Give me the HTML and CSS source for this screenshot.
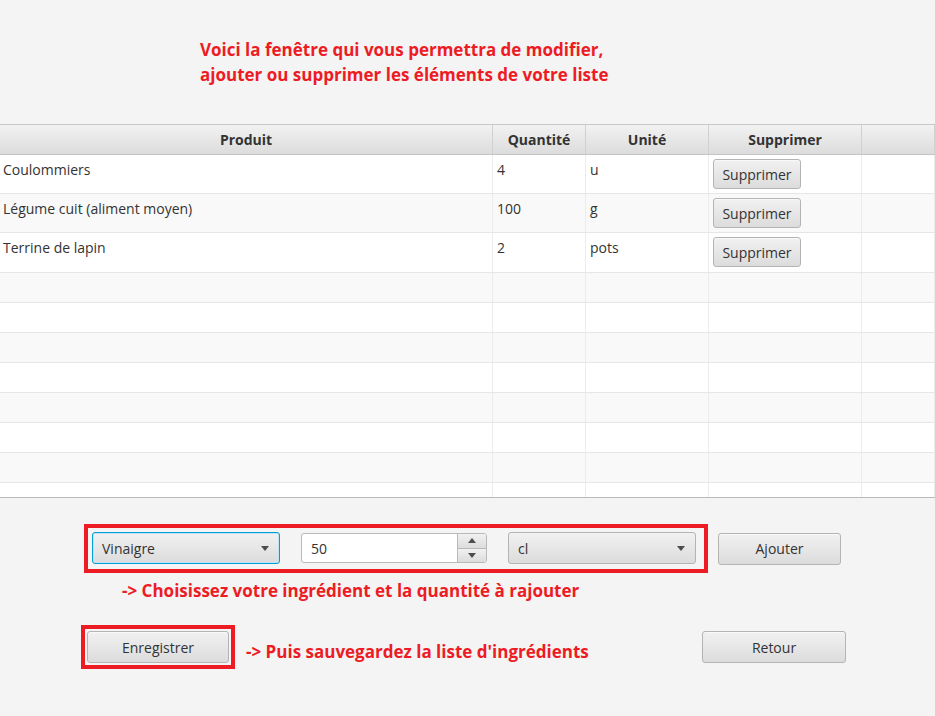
FILE: index.html
```html
<!DOCTYPE html>
<html lang="fr">
<head>
<meta charset="utf-8">
<title>Liste d'ingrédients</title>
<link rel="stylesheet" href="styles.css">
</head>
<body>
<div class="intro">
  <p class="title">Voici la fenêtre qui vous permettra de modifier,<br>ajouter ou supprimer les éléments de votre liste</p>
</div>
<div class="table">
  <div class="row thead">
    <div class="c c1">Produit</div>
    <div class="c c2">Quantité</div>
    <div class="c c3">Unité</div>
    <div class="c c4">Supprimer</div>
    <div class="c c5"></div>
  </div>
  <div class="tbody">
    <div class="row tall">
      <div class="c c1">Coulommiers</div>
      <div class="c c2">4</div>
      <div class="c c3">u</div>
      <div class="c c4"><button class="btn del">Supprimer</button></div>
      <div class="c c5"></div>
    </div>
    <div class="row tall">
      <div class="c c1">Légume cuit (aliment moyen)</div>
      <div class="c c2">100</div>
      <div class="c c3">g</div>
      <div class="c c4"><button class="btn del">Supprimer</button></div>
      <div class="c c5"></div>
    </div>
    <div class="row tall">
      <div class="c c1">Terrine de lapin</div>
      <div class="c c2">2</div>
      <div class="c c3">pots</div>
      <div class="c c4"><button class="btn del">Supprimer</button></div>
      <div class="c c5"></div>
    </div>
    <div class="row"><div class="c c1"></div><div class="c c2"></div><div class="c c3"></div><div class="c c4"></div><div class="c c5"></div></div>
    <div class="row"><div class="c c1"></div><div class="c c2"></div><div class="c c3"></div><div class="c c4"></div><div class="c c5"></div></div>
    <div class="row"><div class="c c1"></div><div class="c c2"></div><div class="c c3"></div><div class="c c4"></div><div class="c c5"></div></div>
    <div class="row"><div class="c c1"></div><div class="c c2"></div><div class="c c3"></div><div class="c c4"></div><div class="c c5"></div></div>
    <div class="row"><div class="c c1"></div><div class="c c2"></div><div class="c c3"></div><div class="c c4"></div><div class="c c5"></div></div>
    <div class="row"><div class="c c1"></div><div class="c c2"></div><div class="c c3"></div><div class="c c4"></div><div class="c c5"></div></div>
    <div class="row"><div class="c c1"></div><div class="c c2"></div><div class="c c3"></div><div class="c c4"></div><div class="c c5"></div></div>
    <div class="row"><div class="c c1"></div><div class="c c2"></div><div class="c c3"></div><div class="c c4"></div><div class="c c5"></div></div>
  </div>
</div>
<div class="controls">
  <div class="add-row">
    <div class="hl-box add-box">
      <div class="combo focused"><span class="combo-text">Vinaigre</span><span class="arrow"></span></div>
      <div class="spinner">
        <span class="field">50</span>
        <span class="spin-btns"><span class="spin up"><span class="tri-up"></span></span><span class="spin down"><span class="arrow"></span></span></span>
      </div>
      <div class="combo"><span class="combo-text">cl</span><span class="arrow"></span></div>
    </div>
    <button class="btn add">Ajouter</button>
  </div>
  <p class="note note-add">-&gt; Choisissez votre ingrédient et la quantité à rajouter</p>
  <div class="save-row">
    <div class="hl-box save-box"><button class="btn save">Enregistrer</button></div>
    <p class="note note-save">-&gt; Puis sauvegardez la liste d'ingrédients</p>
    <button class="btn back">Retour</button>
  </div>
</div>
</body>
</html>
```
FILE: styles.css
```css
* { box-sizing: border-box; }

html, body {
  margin: 0;
  padding: 0;
}

body {
  width: 935px;
  height: 716px;
  overflow: hidden;
  background: #f4f4f4;
  font-family: "Open Sans", "Noto Sans", sans-serif;
  color: #333;
}

.intro {
  height: 124px;
  padding: 37px 0 0 200px;
}

.title {
  margin: 0;
  color: #ed1c24;
  font-weight: 700;
  font-size: 17px;
  line-height: 25px;
}

.table {
  border-top: 1px solid #c8c8c8;
  border-bottom: 1px solid #b9b9b9;
  background: #fff;
}

.row {
  display: flex;
}

.c1 { width: 493px; }
.c2 { width: 93px; }
.c3 { width: 123px; }
.c4 { width: 153px; }
.c5 { flex: 1; }

.thead {
  height: 30px;
  background: linear-gradient(#f2f2f2, #dcdcdc);
  border-bottom: 1px solid #c4c4c4;
}

.thead .c {
  display: flex;
  align-items: center;
  justify-content: center;
  border-right: 1px solid #d0d0d0;
  font-weight: 700;
  font-size: 14px;
  color: #333;
}

.tbody {
  height: 342px;
  overflow: hidden;
}

.tbody .row {
  height: 30px;
  border-bottom: 1px solid #e6e6e6;
}

.tbody .row:nth-child(even) {
  background: #f9f9f9;
}

.tbody .row.tall { height: 39px; }
.tbody .row.tall:nth-child(3) { height: 40px; }

.tbody .c {
  border-right: 1px solid #ececec;
  padding: 5px 4px 0;
  font-size: 14px;
  line-height: 20px;
  color: #333;
}

.tbody .c1 { padding-left: 3px; }
.tbody .c4 { padding-top: 4px; }

.btn {
  font-family: inherit;
  font-size: 14px;
  color: #333;
  background: linear-gradient(#f1f1f1, #dcdcdc);
  border: 1px solid #b4b4b4;
  border-radius: 3px;
  padding: 0;
  box-shadow: inset 0 1px 0 rgba(255,255,255,0.6);
}

.del {
  width: 88px;
  height: 30px;
}

.controls {
  padding-top: 26px;
}

.add-row {
  display: flex;
  align-items: center;
  margin-left: 84px;
}

.hl-box {
  border: 4px solid #ed1c24;
}

.add-box {
  display: flex;
  align-items: center;
  gap: 21px;
  padding: 4px 8px 5px 4px;
}

.combo {
  width: 188px;
  height: 32px;
  display: flex;
  align-items: center;
  justify-content: space-between;
  padding: 0 10px 0 9px;
  background: linear-gradient(#f1f1f1, #dcdcdc);
  border: 1px solid #b4b4b4;
  border-radius: 3px;
  font-size: 14px;
}

.combo.focused {
  border-color: #039ed3;
  box-shadow: inset 0 0 0 1px #bfe3f3;
}

.arrow {
  width: 0;
  height: 0;
  border-left: 4.5px solid transparent;
  border-right: 4.5px solid transparent;
  border-top: 5px solid #4d4d4d;
}

.tri-up {
  width: 0;
  height: 0;
  border-left: 4.5px solid transparent;
  border-right: 4.5px solid transparent;
  border-bottom: 5px solid #4d4d4d;
}

.spinner {
  width: 186px;
  height: 30px;
  display: flex;
  background: #fff;
  border: 1px solid #b9b9b9;
  border-radius: 3px;
  overflow: hidden;
}

.field {
  flex: 1;
  display: flex;
  align-items: center;
  padding-left: 9px;
  font-size: 14px;
}

.spin-btns {
  width: 29px;
  display: flex;
  flex-direction: column;
  border-left: 1px solid #b9b9b9;
}

.spin {
  flex: 1;
  display: flex;
  align-items: center;
  justify-content: center;
  background: linear-gradient(#f1f1f1, #dcdcdc);
}

.spin.up {
  border-bottom: 1px solid #b9b9b9;
}

.add {
  margin-left: 10px;
  width: 123px;
  height: 32px;
}

.note {
  margin: 0;
  color: #ed1c24;
  font-weight: 700;
  font-size: 17px;
  line-height: 25px;
}

.note-add {
  margin: 5px 0 0 122px;
}

.save-row {
  display: flex;
  align-items: center;
  margin: 22px 89px 0 81px;
}

.save-box {
  padding: 2px;
}

.save {
  display: block;
  width: 142px;
  height: 32px;
}

.note-save {
  margin-left: 11px;
  padding-top: 9px;
}

.back {
  margin-left: auto;
  width: 144px;
  height: 32px;
}
```
